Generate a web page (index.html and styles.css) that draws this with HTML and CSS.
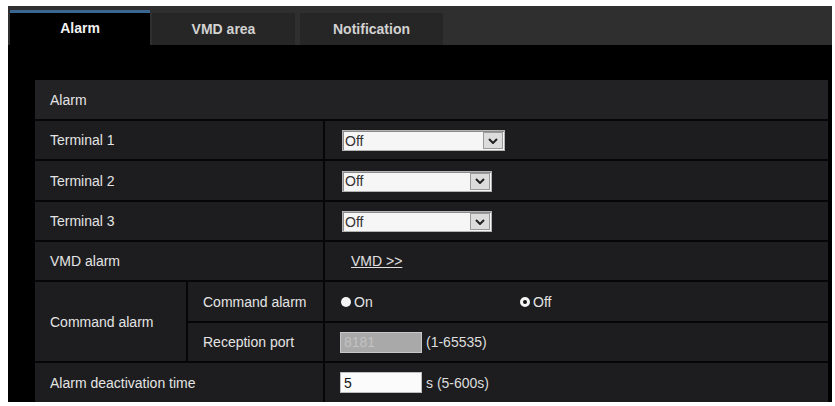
FILE: index.html
```html
<!DOCTYPE html>
<html>
<head>
<meta charset="utf-8">
<link rel="stylesheet" href="styles.css">
</head>
<body>
<div class="frame">
  <div class="tabbar">
    <div class="tab active">Alarm</div>
    <div class="tab t2">VMD area</div>
    <div class="tab t3">Notification</div>
  </div>
  <div class="content">
    <div class="grid">
      <div class="cell head">Alarm</div>

      <div class="cell span2">Terminal 1</div>
      <div class="cell val">
        <div class="select wide"><span class="opt">Off</span><span class="arrow"><svg viewBox="0 0 10 6" width="10" height="6"><polyline points="1,1 5,5 9,1" fill="none" stroke="#222" stroke-width="2"/></svg></span></div>
      </div>

      <div class="cell span2">Terminal 2</div>
      <div class="cell val">
        <div class="select"><span class="opt">Off</span><span class="arrow"><svg viewBox="0 0 10 6" width="10" height="6"><polyline points="1,1 5,5 9,1" fill="none" stroke="#222" stroke-width="2"/></svg></span></div>
      </div>

      <div class="cell span2">Terminal 3</div>
      <div class="cell val">
        <div class="select"><span class="opt">Off</span><span class="arrow"><svg viewBox="0 0 10 6" width="10" height="6"><polyline points="1,1 5,5 9,1" fill="none" stroke="#222" stroke-width="2"/></svg></span></div>
      </div>

      <div class="cell span2">VMD alarm</div>
      <div class="cell val"><a class="link" href="#">VMD &gt;&gt;</a></div>

      <div class="cell grp">Command alarm</div>
      <div class="cell">Command alarm</div>
      <div class="cell val">
        <span class="radio-group on-group"><span class="radio filled"></span>On</span>
        <span class="radio-group"><span class="radio checked"></span>Off</span>
      </div>

      <div class="cell">Reception port</div>
      <div class="cell val"><span class="input disabled">8181</span><span class="unit">(1-65535)</span></div>

      <div class="cell span2">Alarm deactivation time</div>
      <div class="cell val"><span class="input">5</span><span class="unit">s (5-600s)</span></div>
    </div>
  </div>
</div>
</body>
</html>
```

FILE: styles.css
```css
body {
  margin: 0;
  background: #ffffff;
  font-family: "Liberation Sans", Arial, sans-serif;
  font-size: 14px;
}

.frame {
  margin: 6px 0 0 8px;
  width: 824px;
  height: 396px;
  background: #000;
  overflow: hidden;
}

.tabbar {
  height: 39px;
  background: #2f2f2f;
  display: flex;
  align-items: flex-end;
  padding-left: 2px;
  box-sizing: border-box;
}

.tab {
  height: 32px;
  width: 143px;
  background: #262626;
  color: #d2d2d2;
  font-weight: bold;
  display: flex;
  align-items: center;
  justify-content: center;
  box-sizing: border-box;
}

.tab.active {
  width: 140px;
  height: 35px;
  background: #000;
  border-top: 3px solid #3b6690;
  color: #f2f2f2;
  padding-bottom: 2px;
}

.t2 { margin-left: 2px; }
.t3 { margin-left: 5px; }

.content {
  padding: 35px 4px 0 27px;
}

.grid {
  display: grid;
  grid-template-columns: 151px 135px 503px;
  grid-template-rows: 39px 38px 39px 38px 38px 39px 38px 39px;
  gap: 2px;
  background: #060606;
}

.cell {
  background: #1d1d1f;
  color: #e4e4e4;
  display: flex;
  align-items: center;
  padding-left: 15px;
}

.head {
  grid-column: 1 / 4;
  background: #222224;
}

.span2 { grid-column: 1 / 3; }
.grp { grid-row: span 2; }

.val { padding-left: 15px; }

.select {
  height: 21px;
  margin-left: 2px;
  margin-top: 1px;
  box-sizing: border-box;
  background: #f6f6f6;
  border: 1px solid #b4b4b4;
  box-shadow: inset 1px 1px 0 #8c8c8c;
  display: flex;
  align-items: center;
  justify-content: space-between;
  width: 150px;
}

.select.wide { width: 163px; }

.opt {
  color: #333;
  font-size: 14px;
  padding-left: 2px;
}

.arrow {
  width: 20px;
  height: 17px;
  margin-right: 1px;
  box-sizing: border-box;
  background: #dcdcdc;
  border: 1px solid #9a9a9a;
  display: flex;
  align-items: center;
  justify-content: center;
}

.link {
  color: #e0e0e0;
  text-decoration: underline;
  margin-left: 11px;
}

.radio-group {
  display: inline-flex;
  align-items: center;
  color: #e4e4e4;
}

.on-group { width: 179px; }

.radio {
  width: 10px;
  height: 10px;
  border-radius: 50%;
  background: #f4f4f4;
  margin-left: 1px;
  margin-right: 3px;
  box-sizing: border-box;
}

.radio.checked {
  border: 3px solid #f4f4f4;
  background: #111;
}

.input {
  width: 82px;
  height: 21px;
  box-sizing: border-box;
  border: 1px solid #bdbdbd;
  background: #fbfbfb;
  color: #111;
  font-size: 14px;
  padding-left: 3px;
  display: inline-flex;
  align-items: center;
}

.input.disabled {
  background: #a9a9a9;
  color: #c2c2c2;
  border-color: #c8c8c8;
}

.unit {
  margin-left: 4px;
  color: #dedede;
}
```
